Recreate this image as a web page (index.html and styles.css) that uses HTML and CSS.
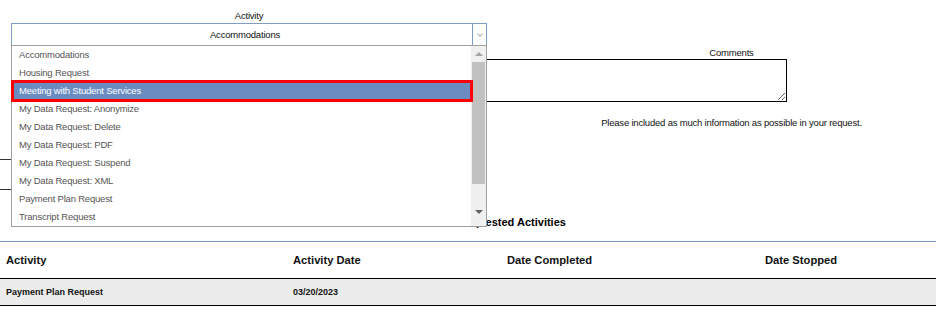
FILE: index.html
```html
<!DOCTYPE html>
<html lang="en">

<head>
    <meta charset="UTF-8">
    <meta name="viewport" content="width=device-width, initial-scale=1.0">
    <title>Requested Activities</title>
    <link rel="stylesheet" href="styles.css">
</head>

<body>
    <div class="request-form">
        <div class="field-activity">
            <label class="field-label">Activity</label>
            <div class="select">
                <div class="select-value">Accommodations</div>
                <div class="select-arrow"><span class="chevron"></span></div>

                <!-- open dropdown -->
                <div class="dropdown">
                    <ul class="options">
                        <li>Accommodations</li>
                        <li>Housing Request</li>
                        <li class="selected">Meeting with Student Services</li>
                        <li>My Data Request: Anonymize</li>
                        <li>My Data Request: Delete</li>
                        <li>My Data Request: PDF</li>
                        <li>My Data Request: Suspend</li>
                        <li>My Data Request: XML</li>
                        <li>Payment Plan Request</li>
                        <li>Transcript Request</li>
                    </ul>
                    <div class="scrollbar">
                        <span class="arrow-up"></span>
                        <span class="thumb"></span>
                        <span class="arrow-down"></span>
                    </div>
                </div>
            </div>
            <div class="date-box"></div>
        </div>

        <div class="field-comments">
            <label class="field-label comments-label">Comments</label>
            <textarea class="comments"></textarea>
            <p class="note">Please included as much information as possible in your request.</p>
        </div>
    </div>

    <h3 class="section-title">Requested Activities</h3>

    <table class="activities">
        <thead>
            <tr>
                <th class="col-activity">Activity</th>
                <th class="col-date">Activity Date</th>
                <th class="col-completed">Date Completed</th>
                <th>Date Stopped</th>
            </tr>
        </thead>
        <tbody>
            <tr>
                <td>Payment Plan Request</td>
                <td>03/20/2023</td>
                <td></td>
                <td></td>
            </tr>
        </tbody>
    </table>
</body>

</html>
```

FILE: styles.css
```css
/* General Reset */
* {
    margin: 0;
    padding: 0;
    box-sizing: border-box;
}

body {
    font-family: 'Liberation Sans', Arial, sans-serif;
    font-size: 9.5px;
    letter-spacing: -0.2px;
    color: #222;
    background: #fff;
    overflow-x: hidden;
}

.request-form {
    display: flex;
    padding: 9px 0 0 11px;
}

.field-label {
    display: block;
    text-align: center;
    line-height: 13px;
    height: 13px;
    color: #111;
}

/* Activity select */
.field-activity {
    width: 476px;
    flex-shrink: 0;
    position: relative;
    z-index: 2;
}

.select {
    position: relative;
    display: flex;
    height: 23px;
    margin-top: 1px;
    border: 1px solid #7f9dc6;
    background: #fff;
}

.select-value {
    flex: 1;
    text-align: center;
    line-height: 21px;
    padding-left: 6px;
    color: #111;
}

.select-arrow {
    width: 14px;
    border-left: 1px solid #7f9dc6;
    display: flex;
    align-items: center;
    justify-content: center;
}

.chevron {
    width: 4px;
    height: 4px;
    border-right: 1px solid #b0b0b0;
    border-bottom: 1px solid #b0b0b0;
    transform: rotate(45deg);
    margin-top: -2px;
}

.dropdown {
    position: absolute;
    top: 21px;
    left: -1px;
    width: 476px;
    height: 182px;
    display: flex;
    border: 1px solid #a0a0a0;
    background: #fff;
}

.options {
    flex: 1;
    list-style: none;
    padding-left: 1px;
}

.options li {
    height: 18px;
    line-height: 18px;
    padding-left: 6px;
    color: #555;
    white-space: nowrap;
}

.options li.selected {
    background-color: #6a8cc0;
    color: #fff;
    outline: 3px solid #ff0000;
    outline-offset: -1px;
    position: relative;
}

.scrollbar {
    width: 15px;
    background: #f0f0f0;
    display: flex;
    flex-direction: column;
    align-items: center;
}

.arrow-up,
.arrow-down {
    width: 0;
    height: 0;
    border-left: 4px solid transparent;
    border-right: 4px solid transparent;
}

.arrow-up {
    margin-top: 6px;
    border-bottom: 4px solid #a3a3a3;
}

.arrow-down {
    margin-top: 26px;
    border-top: 4px solid #606060;
}

.thumb {
    width: 13px;
    height: 122px;
    margin-top: 6px;
    background: #c1c1c1;
}

.date-box {
    margin: 113px 0 0 -11px;
    width: 200px;
    height: 31px;
    border-top: 1px solid #333;
    border-bottom: 1px solid #333;
}

/* Comments */
.field-comments {
    flex: 1;
    padding-left: 40px;
}

.comments-label {
    margin-top: 37px;
}

.comments {
    display: block;
    margin: 0 0 0 -80px;
    width: 340px;
    height: 43px;
    border: 1px solid #000;
    resize: both;
    font-family: inherit;
}

.note {
    margin-top: 14px;
    text-align: center;
    line-height: 13px;
    color: #111;
}

/* Activities table */
.section-title {
    margin-top: 25px;
    padding-left: 88px;
    text-align: center;
    font-size: 11px;
    letter-spacing: 0;
    line-height: 14px;
    color: #000;
}

.activities {
    width: 100%;
    margin-top: 12px;
    border-collapse: collapse;
    border-top: 1px solid #7b96c0;
    letter-spacing: 0;
}

.activities th {
    height: 37px;
    padding: 0 6px;
    text-align: left;
    font-size: 11.2px;
    color: #111;
}

.col-activity {
    width: 287px;
}

.col-date {
    width: 214px;
}

.col-completed {
    width: 258px;
}

.activities td {
    height: 27px;
    padding: 0 6px 1px;
    background-color: #ececec;
    border-top: 1px solid #000;
    border-bottom: 1px solid #000;
    font-size: 9px;
    font-weight: bold;
    color: #111;
}
```
